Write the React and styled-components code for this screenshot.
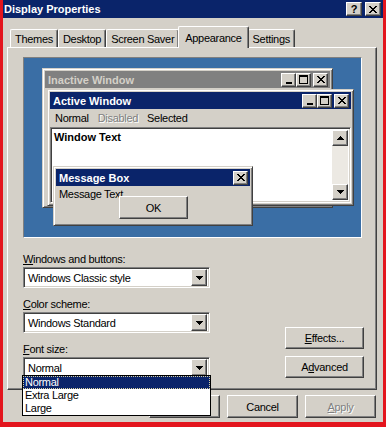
import React from 'react';
import styled, { createGlobalStyle, css } from 'styled-components';

const c = {
  face: '#d4d0c8',
  light: '#ffffff',
  shadow: '#808080',
  dark: '#404040',
  navy: '#0a246a',
  desk: '#3a6ea5',
  frame: '#e3151d',
};

const GlobalStyle = createGlobalStyle`
  html, body { margin: 0; padding: 0; background: ${c.face}; }
  body {
    font-family: 'Liberation Sans', Arial, sans-serif;
    font-size: 11px;
    color: #000;
  }
`;

const raised = css`
  border: 1px solid;
  border-color: ${c.light} ${c.dark} ${c.dark} ${c.light};
  box-shadow: inset -1px -1px ${c.shadow};
`;

const sunken = css`
  border: 1px solid;
  border-color: ${c.shadow} ${c.light} ${c.light} ${c.shadow};
  box-shadow: inset 1px 1px ${c.dark}, inset -1px -1px ${c.face};
`;

const disabledText = css`
  color: ${c.shadow};
  text-shadow: 1px 1px ${c.light};
`;

const Window = styled.div`
  width: 386px;
  height: 427px;
  box-sizing: border-box;
  border: 3px solid ${c.frame};
  border-top: 0;
  border-bottom-width: 5px;
  background: ${c.face};
  display: flex;
  flex-direction: column;
`;

const TitleBar = styled.div`
  height: 18px;
  flex: none;
  background: ${c.navy};
  display: flex;
  align-items: center;
  justify-content: space-between;
  padding: 0 2px 0 1px;
`;

const TitleText = styled.span`
  color: #fff;
  font-weight: bold;
  font-size: 11px;
`;

const CaptionButtons = styled.div`
  display: flex;
  gap: ${p => p.$gap ?? 2}px;
`;

const CapBtn = styled.div`
  width: ${p => p.$w ?? 15}px;
  height: 14px;
  box-sizing: border-box;
  background: ${c.face};
  ${raised};
  display: flex;
  align-items: center;
  justify-content: center;
  margin-left: ${p => p.$ml ?? 0}px;
  font-weight: bold;
  font-size: 11px;
  line-height: 1;
  letter-spacing: 0;
  color: #000;
`;

const Body = styled.div`
  flex: 1;
  padding: 8px 6px 0 4px;
  display: flex;
  flex-direction: column;
  letter-spacing: -0.3px;
`;

const TabRow = styled.div`
  display: flex;
  align-items: flex-end;
  height: 21px;
  padding-left: 3px;
  position: relative;
  z-index: 1;
`;

const Tab = styled.div`
  position: relative;
  box-sizing: border-box;
  height: ${p => (p.$active ? 22 : 18)}px;
  padding: 0 ${p => (p.$active ? 6 : 4)}px;
  margin: 0 ${p => (p.$active ? -1 : 0)}px ${p => (p.$active ? -1 : 0)}px;
  border: 1px solid;
  border-bottom: 0;
  border-color: ${c.light} ${c.dark} ${c.dark} ${c.light};
  box-shadow: inset -1px 0 ${c.shadow};
  border-radius: 2px 2px 0 0;
  background: ${c.face};
  display: flex;
  align-items: center;
  z-index: ${p => (p.$active ? 2 : 1)};
  white-space: nowrap;
`;

const Panel = styled.div`
  border: 1px solid;
  border-color: ${c.light} ${c.dark} ${c.dark} ${c.light};
  box-shadow: inset -1px -1px ${c.shadow};
  padding: 9px 14px 11px 15px;
`;

const Preview = styled.div`
  position: relative;
  width: 339px;
  height: 181px;
  box-sizing: border-box;
  border: 1px solid;
  border-color: ${c.shadow} ${c.light} ${c.light} ${c.shadow};
  background: ${c.desk};
  overflow: hidden;
`;

const frame = css`
  position: absolute;
  box-sizing: border-box;
  background: ${c.face};
  border: 1px solid;
  border-color: ${c.face} ${c.dark} ${c.dark} ${c.face};
  box-shadow: inset 1px 1px ${c.light}, inset -1px -1px ${c.shadow};
  padding: 2px;
  display: flex;
  flex-direction: column;
`;

const InactiveWin = styled.div`
  ${frame};
  left: 18px;
  top: 10px;
  width: 291px;
  height: 140px;
`;

const ActiveWin = styled.div`
  ${frame};
  left: 23px;
  top: 31px;
  width: 307px;
  height: 117px;
`;

const MsgBox = styled.div`
  ${frame};
  left: 29px;
  top: 108px;
  width: 200px;
  height: 60px;
`;

const Caption = styled.div`
  height: 17px;
  flex: none;
  background: ${p => (p.$active ? c.navy : c.shadow)};
  color: ${p => (p.$active ? '#fff' : c.face)};
  font-weight: bold;
  font-size: 11px;
  letter-spacing: 0;
  display: flex;
  align-items: center;
  justify-content: space-between;
  padding: 0 2px 0 3px;
`;

const MenuBar = styled.div`
  height: 18px;
  flex: none;
  display: flex;
  align-items: center;
  gap: 9px;
  padding-left: 5px;
`;

const MenuItem = styled.span`
  ${p => p.$disabled && disabledText};
`;

const TextArea = styled.div`
  flex: 1;
  ${sunken};
  background: #fff;
  display: flex;
  padding: 2px;
`;

const WindowText = styled.div`
  flex: 1;
  font-weight: bold;
  letter-spacing: 0;
  padding: 1px 1px;
`;

const ScrollBar = styled.div`
  width: 16px;
  display: flex;
  flex-direction: column;
`;

const ScrollBtn = styled.div`
  width: 16px;
  height: 16px;
  box-sizing: border-box;
  background: ${c.face};
  ${raised};
  display: flex;
  align-items: center;
  justify-content: center;
`;

const Track = styled.div`
  flex: 1;
  background: #ece9e3;
`;

const MsgBody = styled.div`
  padding: 2px 3px;
  display: flex;
  flex-direction: column;
  align-items: flex-start;
`;

const Button = styled.div`
  position: relative;
  box-sizing: border-box;
  width: ${p => p.$w ?? 71}px;
  height: ${p => p.$h ?? 23}px;
  background: ${c.face};
  ${raised};
  display: flex;
  align-items: center;
  justify-content: center;
  ${p => p.$disabled && disabledText};
`;

const OkInBox = styled(Button)`
  margin: -4px 0 0 60px;
`;

const Controls = styled.div`
  display: flex;
  justify-content: space-between;
  align-items: flex-end;
  margin-top: 15px;
  width: 341px;
`;

const Fields = styled.div`
  display: flex;
  flex-direction: column;
  gap: 10px;
  width: 187px;
`;

const Field = styled.div`
  display: flex;
  flex-direction: column;
  gap: 1px;
`;

const Label = styled.div`
  line-height: 13px;
`;

const Select = styled.div`
  position: relative;
  height: 21px;
  box-sizing: border-box;
  ${sunken};
  background: #fff;
  display: flex;
  align-items: center;
  justify-content: space-between;
  padding: 2px 2px 2px 4px;
`;

const ArrowBtn = styled(ScrollBtn)`
  height: 17px;
`;

const ListBox = styled.div`
  position: absolute;
  left: -2px;
  top: 17px;
  width: 189px;
  box-sizing: border-box;
  border: 1px solid #000;
  background: #fff;
  z-index: 5;
`;

const ListItem = styled.div`
  height: 13px;
  line-height: 13px;
  padding-left: 2px;
  box-sizing: border-box;
  ${p =>
    p.$selected &&
    css`
      background: ${c.navy};
      color: #fff;
      outline: 1px dotted #d8d0a0;
      outline-offset: -1px;
    `}
`;

const SideButtons = styled.div`
  display: flex;
  flex-direction: column;
  gap: 7px;
`;

const BottomRow = styled.div`
  display: flex;
  justify-content: flex-end;
  gap: 7px;
  margin-top: 5px;
  padding-right: 1px;
`;

const CloseGlyph = () => (
  <svg width="8" height="7" viewBox="0 0 8 7" shapeRendering="crispEdges">
    <path d="M0 0h2v1h1v1h2V1h1V0h2v1H7v1H6v1H5v1h1v1h1v1h1v1H6V6H5V5H3v1H2v1H0V6h1V5h1V4h1V3H2V2H1V1H0z" fill="#000" />
  </svg>
);

const MinGlyph = () => (
  <svg width="8" height="8" viewBox="0 0 8 8" shapeRendering="crispEdges">
    <rect x="1" y="6" width="6" height="2" fill="#000" />
  </svg>
);

const MaxGlyph = () => (
  <svg width="9" height="9" viewBox="0 0 9 9" shapeRendering="crispEdges">
    <path d="M0 0h9v9H0z M1 2v6h7V2z" fill="#000" fillRule="evenodd" />
  </svg>
);

const Arrow = ({ up }) => (
  <svg width="7" height="4" viewBox="0 0 7 4" shapeRendering="crispEdges">
    <path d={up ? 'M3 0h1v1h1v1h1v1h1v1H0V3h1V2h1V1h1z' : 'M0 0h7v1H6v1H5v1H4v1H3V3H2V2H1V1H0z'} fill="#000" />
  </svg>
);

const WinButtons = () => (
  <CaptionButtons $gap={0}>
    <CapBtn><MinGlyph /></CapBtn>
    <CapBtn><MaxGlyph /></CapBtn>
    <CapBtn $ml={2}><CloseGlyph /></CapBtn>
  </CaptionButtons>
);

const tabs = ['Themes', 'Desktop', 'Screen Saver', 'Appearance', 'Settings'];

export default function App() {
  return (
    <>
      <GlobalStyle />
      <Window>
        <TitleBar>
          <TitleText>Display Properties</TitleText>
          <CaptionButtons $gap={3}>
            <CapBtn $w={16}>?</CapBtn>
            <CapBtn $w={16}><CloseGlyph /></CapBtn>
          </CaptionButtons>
        </TitleBar>
        <Body>
          <TabRow>
            {tabs.map(t => (
              <Tab key={t} $active={t === 'Appearance'}>{t}</Tab>
            ))}
          </TabRow>
          <Panel>
            <Preview>
              <InactiveWin>
                <Caption>
                  Inactive Window
                  <WinButtons />
                </Caption>
              </InactiveWin>
              <ActiveWin>
                <Caption $active>
                  Active Window
                  <WinButtons />
                </Caption>
                <MenuBar>
                  <MenuItem>Normal</MenuItem>
                  <MenuItem $disabled>Disabled</MenuItem>
                  <MenuItem>Selected</MenuItem>
                </MenuBar>
                <TextArea>
                  <WindowText>Window Text</WindowText>
                  <ScrollBar>
                    <ScrollBtn><Arrow up /></ScrollBtn>
                    <Track />
                    <ScrollBtn><Arrow /></ScrollBtn>
                  </ScrollBar>
                </TextArea>
              </ActiveWin>
              <MsgBox>
                <Caption $active>
                  Message Box
                  <CapBtn><CloseGlyph /></CapBtn>
                </Caption>
                <MsgBody>
                  <span>Message Text</span>
                  <OkInBox $w={69}>OK</OkInBox>
                </MsgBody>
              </MsgBox>
            </Preview>

            <Controls>
              <Fields>
                <Field>
                  <Label><u>W</u>indows and buttons:</Label>
                  <Select>
                    Windows Classic style
                    <ArrowBtn><Arrow /></ArrowBtn>
                  </Select>
                </Field>
                <Field>
                  <Label><u>C</u>olor scheme:</Label>
                  <Select>
                    Windows Standard
                    <ArrowBtn><Arrow /></ArrowBtn>
                  </Select>
                </Field>
                <Field>
                  <Label><u>F</u>ont size:</Label>
                  <Select>
                    Normal
                    <ArrowBtn><Arrow /></ArrowBtn>
                    <ListBox>
                      <ListItem $selected>Normal</ListItem>
                      <ListItem>Extra Large</ListItem>
                      <ListItem>Large</ListItem>
                    </ListBox>
                  </Select>
                </Field>
              </Fields>
              <SideButtons>
                <Button $w={79} $h={22}><u>E</u>ffects...</Button>
                <Button $w={79} $h={22}>A<u>d</u>vanced</Button>
              </SideButtons>
            </Controls>
          </Panel>
          <BottomRow>
            <Button>OK</Button>
            <Button>Cancel</Button>
            <Button $disabled><u>A</u>pply</Button>
          </BottomRow>
        </Body>
      </Window>
    </>
  );
}
